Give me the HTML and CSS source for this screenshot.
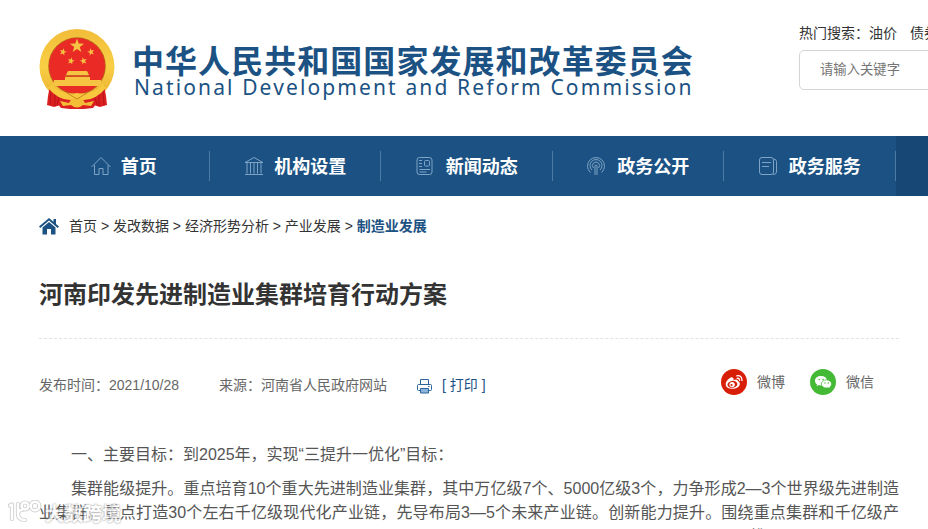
FILE: index.html
```html
<!DOCTYPE html>
<html lang="zh-CN">
<head>
    <meta charset="UTF-8">
    <meta name="viewport" content="width=device-width, initial-scale=1.0">
    <title>河南印发先进制造业集群培育行动方案</title>
    <link rel="stylesheet" href="styles.css">
</head>
<body>
    <header class="header">
        <div class="logo">
            <svg class="emblem" width="76" height="82" viewBox="0 0 76 82">
                <defs>
                    <linearGradient id="gold" x1="0" y1="0" x2="0" y2="1">
                        <stop offset="0" stop-color="#f2bd3a"/>
                        <stop offset=".5" stop-color="#f8cf45"/>
                        <stop offset="1" stop-color="#e9ab2c"/>
                    </linearGradient>
                    <path id="star" d="M0-6.5 1.5-2.1 6.2-2 2.4.8 3.8 5.3 0 2.6-3.8 5.3-2.4.8-6.2-2-1.5-2.1z"/>
                </defs>
                <circle cx="38" cy="38.500" r="37.5" fill="url(#gold)"/>
                <circle cx="38" cy="38" r="28.8" fill="#b96b1c"/>
                <circle cx="38" cy="38" r="28" fill="#e92a25"/>
                <g fill="#f6c343">
                    <use href="#star" transform="translate(38 18) scale(1.15)"/>
                    <use href="#star" transform="translate(24 24) scale(.58) rotate(15)"/>
                    <use href="#star" transform="translate(52 24) scale(.58) rotate(-15)"/>
                    <use href="#star" transform="translate(32 33) scale(.58) rotate(15)"/>
                    <use href="#star" transform="translate(44.500 33) scale(.58) rotate(-15)"/>
                    <path d="M29 43h19l2 4H27zM26 49h25v3H26zM15 52h47v6H14z"/>
                </g>
                <path d="M26 47.200h24v1.300H26z" fill="#c96d20"/>
                <!-- curtain under the wheat ring -->
                <path d="M11 57 21 66 38 70 55 66 65 57 67 68 68 77 61 79 56 77.500 54 80 45 81H31L22 80 20 77.500 15 79 8 77 9 68z" fill="#dc2022"/>
                <path d="M12 62 11 77M16 66V78M20 69 18 77M60 66V78M56 69 58 77M64 62 65 77" stroke="#9e0b14" stroke-opacity=".6" fill="none"/>
                <path d="M12 56Q23 68 38 65 53 68 64 56L67 60Q56 73 43 72L38 70 33 72Q20 73 9 60z" fill="#f7c83d"/>
                <path d="M21 73 30 75Q32 70 38 70T46 75L55 73 52 78 44 77Q38 82 32 77L24 78z" fill="#f3bd35"/>
                <path d="M28 65 38 71 48 65" stroke="#c98422" fill="none"/>
            </svg>
            <div class="logo-text">
                <div class="logo-cn">中华人民共和国国家发展和改革委员会</div>
                <div class="logo-en">National Development and Reform Commission</div>
            </div>
        </div>
        <div class="search">
            <div class="hot">热门搜索：<a>油价</a><a>债券</a></div>
            <input class="search-input" type="text" placeholder="请输入关键字">
        </div>
    </header>

    <nav class="nav">
        <a class="nav-item">
            <svg class="nav-icon" viewBox="0 0 20 20"><path d="M.5 11 10 1.5 19.5 11M3.5 9v9.5H8V12.500h4v6h5V9"/></svg><span>首页</span>
        </a>
        <a class="nav-item">
            <svg class="nav-icon" viewBox="0 0 20 20"><path d="M10 1.500 19 6.500H1zM3 7v10.500M6.500 7v10.500M10 7v10.500M13.500 7v10.500M17 7v10.500M1 18.500h18"/></svg><span>机构设置</span>
        </a>
        <a class="nav-item">
            <svg class="nav-icon" viewBox="0 0 20 20"><rect x="1" y="1.500" width="15" height="17" rx="2.500"/><rect x="8.500" y="4.500" width="5" height="5.500" rx="1"/><path d="M3 4.500h3M3 7.500h3M3 10.500h3M3.500 13.500h10.500M3.500 16h7"/></svg><span>新闻动态</span>
        </a>
        <a class="nav-item">
            <svg class="nav-icon" viewBox="0 0 20 20"><path d="M3.500 16.500A8.500 8.500 0 1 1 14.500 16.500M5 14A6 6 0 1 1 13 14M6.500 12A3.500 3.500 0 1 1 11.500 12"/><path d="M8 19V10a1 1 0 0 1 2 0v9"/></svg><span>政务公开</span>
        </a>
        <a class="nav-item">
            <svg class="nav-icon" viewBox="0 0 20 20"><rect x=".5" y="1.500" width="14" height="17" rx="2.500"/><path d="M3 6.500h9M3 10.500h7M14.500 3Q17.500 3 17.500 5.500V16Q17.500 18.500 14 18.500"/></svg><span>政务服务</span>
        </a>
        <div class="nav-more"></div>
    </nav>

    <main class="main">
        <div class="crumbs">
            <svg width="20" height="17" viewBox="0 0 20 17" fill="#1b5283"><path d="M10 0 0 8.600 1.300 9.900 10 2.500 18.700 9.900 20 8.600 17 6V1H14.500V3.800z"/><path d="M10 4 3.500 9.500V16.500H8V11h4v5.500h4.500V9.500z"/></svg>
            <span>首页 &gt; 发改数据 &gt; 经济形势分析 &gt; 产业发展 &gt; <b>制造业发展</b></span>
        </div>

        <h1 class="title">河南印发先进制造业集群培育行动方案</h1>

        <div class="meta">
            <span class="date">发布时间：2021/10/28</span>
            <span class="source">来源：河南省人民政府网站</span>
            <a class="print">
                <svg width="15" height="15" viewBox="0 0 15 15" fill="none" stroke="#2b659b"><path d="M3.500 5V.5h8V5M3 11.500H1.500Q.5 11.500.5 10.500V6.500Q.5 5.500 1.500 5.500h12q1 0 1 1v4q0 1-1 1H12"/><path d="M3.500 9.500h8v4.500h-8z" fill="#8cb5dc"/><path d="M11 7.500h1.500"/></svg>
                <span>[ 打印 ]</span>
            </a>
            <div class="share">
                <svg width="26" height="26" viewBox="0 0 26 26">
                    <circle cx="13" cy="13" r="13" fill="#d81e06"/>
                    <path d="M11.500 8.500Q13 9 12.500 11 16.500 9.500 17 12 18 12.500 18.800 14C20 21 5 22 4.700 15.500 4.500 12 9.500 7.500 11.500 8.500z" fill="#fff"/>
                    <ellipse cx="11.400" cy="15.400" rx="5" ry="3.500" transform="rotate(-8 11.400 15.400)" fill="#d81e06"/>
                    <circle cx="11.100" cy="15.600" r="2.700" fill="#fff"/>
                    <circle cx="10.500" cy="16" r="1.100" fill="#d81e06"/>
                    <path d="M15.800 6.800Q20.800 6 21 11.500M16.200 9.300Q18.500 9 18.600 11.300" fill="none" stroke="#fff" stroke-width="1.300" stroke-linecap="round"/>
                </svg>
                <span>微博</span>
                <svg width="26" height="26" viewBox="0 0 26 26">
                    <circle cx="13" cy="13" r="13" fill="#44b935"/>
                    <path d="M11 7C7.500 7 5 9 5 11.700c0 1.600.9 2.900 2.100 3.700L6.500 17.300l2.400-1.200c.7.200 1.400.3 2.100.3 3.600 0 6-2.100 6-4.700S14.600 7 11 7z" fill="#fff"/>
                    <path d="M16.500 10.900c2.900 0 5 1.800 5 4.100 0 1.300-.7 2.400-1.700 3.100l.4 1.500-1.900-.9c-.6.200-1.200.3-1.800.3-3 0-5.100-1.700-5.100-4s2.100-4.100 5.100-4.100z" fill="#fff" stroke="#44b935" stroke-width=".7"/>
                    <g fill="#44b935"><circle cx="9.200" cy="10.500" r=".8"/><circle cx="13" cy="10.500" r=".8"/><circle cx="15" cy="14" r=".7"/><circle cx="18.300" cy="14" r=".7"/></g>
                </svg>
                <span>微信</span>
            </div>
        </div>

        <article class="content">
            <p>一、主要目标：到2025年，实现“三提升一优化”目标：</p>
            <p>
                <span class="line indent">集群能级提升。重点培育10个重大先进制造业集群，其中万亿级7个、5000亿级3个，力争形成2—3个世界级先进制造</span>
                <span class="line">业集群。重点打造30个左右千亿级现代化产业链，先导布局3—5个未来产业链。创新能力提升。围绕重点集群和千亿级产</span>
                <span class="line rest"><span>“</span><span>推</span></span>
            </p>
        </article>
    </main>

    <div class="watermark">
        <svg width="36" height="24" viewBox="0 0 36 24">
            <g fill="none" stroke="#999" stroke-opacity=".6" stroke-width="4.200" stroke-linecap="round" stroke-linejoin="round"><path d="M4 5.500 6 4.500V19M19 20Q12 20 12 14V4M12 14Q12 10 16 10"/><circle cx="19" cy="6" r="3.500"/><circle cx="29" cy="6" r="4.300"/></g>
            <g fill="none" stroke="#fff" stroke-width="2.400" stroke-linecap="round" stroke-linejoin="round"><path d="M4 5.500 6 4.500V19M19 20Q12 20 12 14V4M12 14Q12 10 16 10"/><circle cx="19" cy="6" r="3.500"/><circle cx="29" cy="6" r="4.300"/></g>
        </svg>
        <span>大数跨境</span>
    </div>
</body>
</html>
```

FILE: styles.css
```css
* {
    box-sizing: border-box;
}

body {
    margin: 0;
    width: 928px;
    height: 529px;
    overflow: hidden;
    background: #fff;
    color: #333;
    font-family: "Liberation Sans", "Noto Sans CJK SC", sans-serif;
    font-size: 14px;
}

.header {
    display: flex;
    justify-content: space-between;
    height: 136px;
    padding-left: 39px;
}

.logo {
    display: flex;
    padding-top: 28px;
}

.logo-text {
    padding: 13px 0 0 17px;
    color: #1b5283;
    white-space: nowrap;
}

.logo-cn {
    font-size: 32px;
    font-weight: bold;
    line-height: 42px;
    letter-spacing: 1.05px;
}

.logo-en {
    font-family: "Noto Sans", sans-serif;
    font-size: 21px;
    line-height: 24px;
    letter-spacing: 2.12px;
    margin-top: -8px;
    padding-left: 2px;
}

.search {
    width: 129px;
    padding-top: 23px;
    overflow: hidden;
    white-space: nowrap;
}

.hot {
    line-height: 20px;
    margin-bottom: 7px;
}

.hot a {
    margin-right: 13px;
}

.search-input {
    width: 300px;
    height: 40px;
    padding: 0 20px 2px;
    border: 1px solid #d5d5d5;
    border-radius: 5px;
    font: 13.333px "Liberation Sans", "Noto Sans CJK SC", sans-serif;
}

.search-input::placeholder {
    color: #757575;
}

.nav {
    display: flex;
    height: 60px;
    padding-left: 38px;
    background: #1b5283;
}

.nav-item {
    display: flex;
    align-items: center;
    justify-content: center;
    gap: 10px;
    width: 171.5px;
    color: #fff;
    font-size: 18px;
    font-weight: bold;
    background: linear-gradient(#4d7aa3, #4d7aa3) right center / 1px 30px no-repeat;
}

.nav-item span {
    padding-bottom: 2px;
}

.nav-icon {
    width: 20px;
    height: 20px;
    fill: none;
    stroke: #7fa3c5;
}

.nav-more {
    flex: 1;
    background: #174875;
}

.main {
    width: 860px;
    margin-left: 39px;
}

.crumbs {
    display: flex;
    align-items: center;
    gap: 10px;
    height: 60px;
}

.crumbs span {
    padding-bottom: 2px;
}

.crumbs b {
    color: #1b5283;
}

.title {
    margin: 0;
    height: 83px;
    padding-top: 21px;
    border-bottom: 1px dashed #e2e2e2;
    font-size: 24px;
    line-height: 36px;
}

.meta {
    display: flex;
    align-items: center;
    height: 94px;
    color: #666;
}

.date,
.source,
.print span {
    padding-bottom: 4px;
}

.source {
    margin-left: 40px;
}

.print {
    display: flex;
    align-items: center;
    gap: 10px;
    margin-left: 30px;
    color: #1b5283;
}

.share {
    display: flex;
    align-items: center;
    gap: 10px;
    margin: 0 25px 8px auto;
}

.share span {
    padding-bottom: 2px;
}

.share span + svg {
    margin-left: 15px;
}

.content {
    padding-top: 10px;
    color: #555;
    font-size: 16px;
    line-height: 24px;
}

.content p {
    margin: 0 0 10px;
    text-indent: 2em;
}

.line {
    display: block;
    height: 24px;
    text-indent: 0;
    white-space: nowrap;
    text-align-last: justify;
}

.indent {
    padding-left: 32px;
}

.rest {
    display: flex;
    padding-left: 382px;
    gap: 324px;
}

/* semi-transparent stamp in the corner, over the article */
.watermark {
    position: absolute;
    left: 6px;
    top: 499px;
    display: flex;
    align-items: center;
    gap: 3px;
    height: 26px;
    opacity: .75;
    color: #fff;
    font-size: 19px;
    font-weight: bold;
    text-shadow: 0 0 2px #888, 0 0 2px #aaa;
}
```
